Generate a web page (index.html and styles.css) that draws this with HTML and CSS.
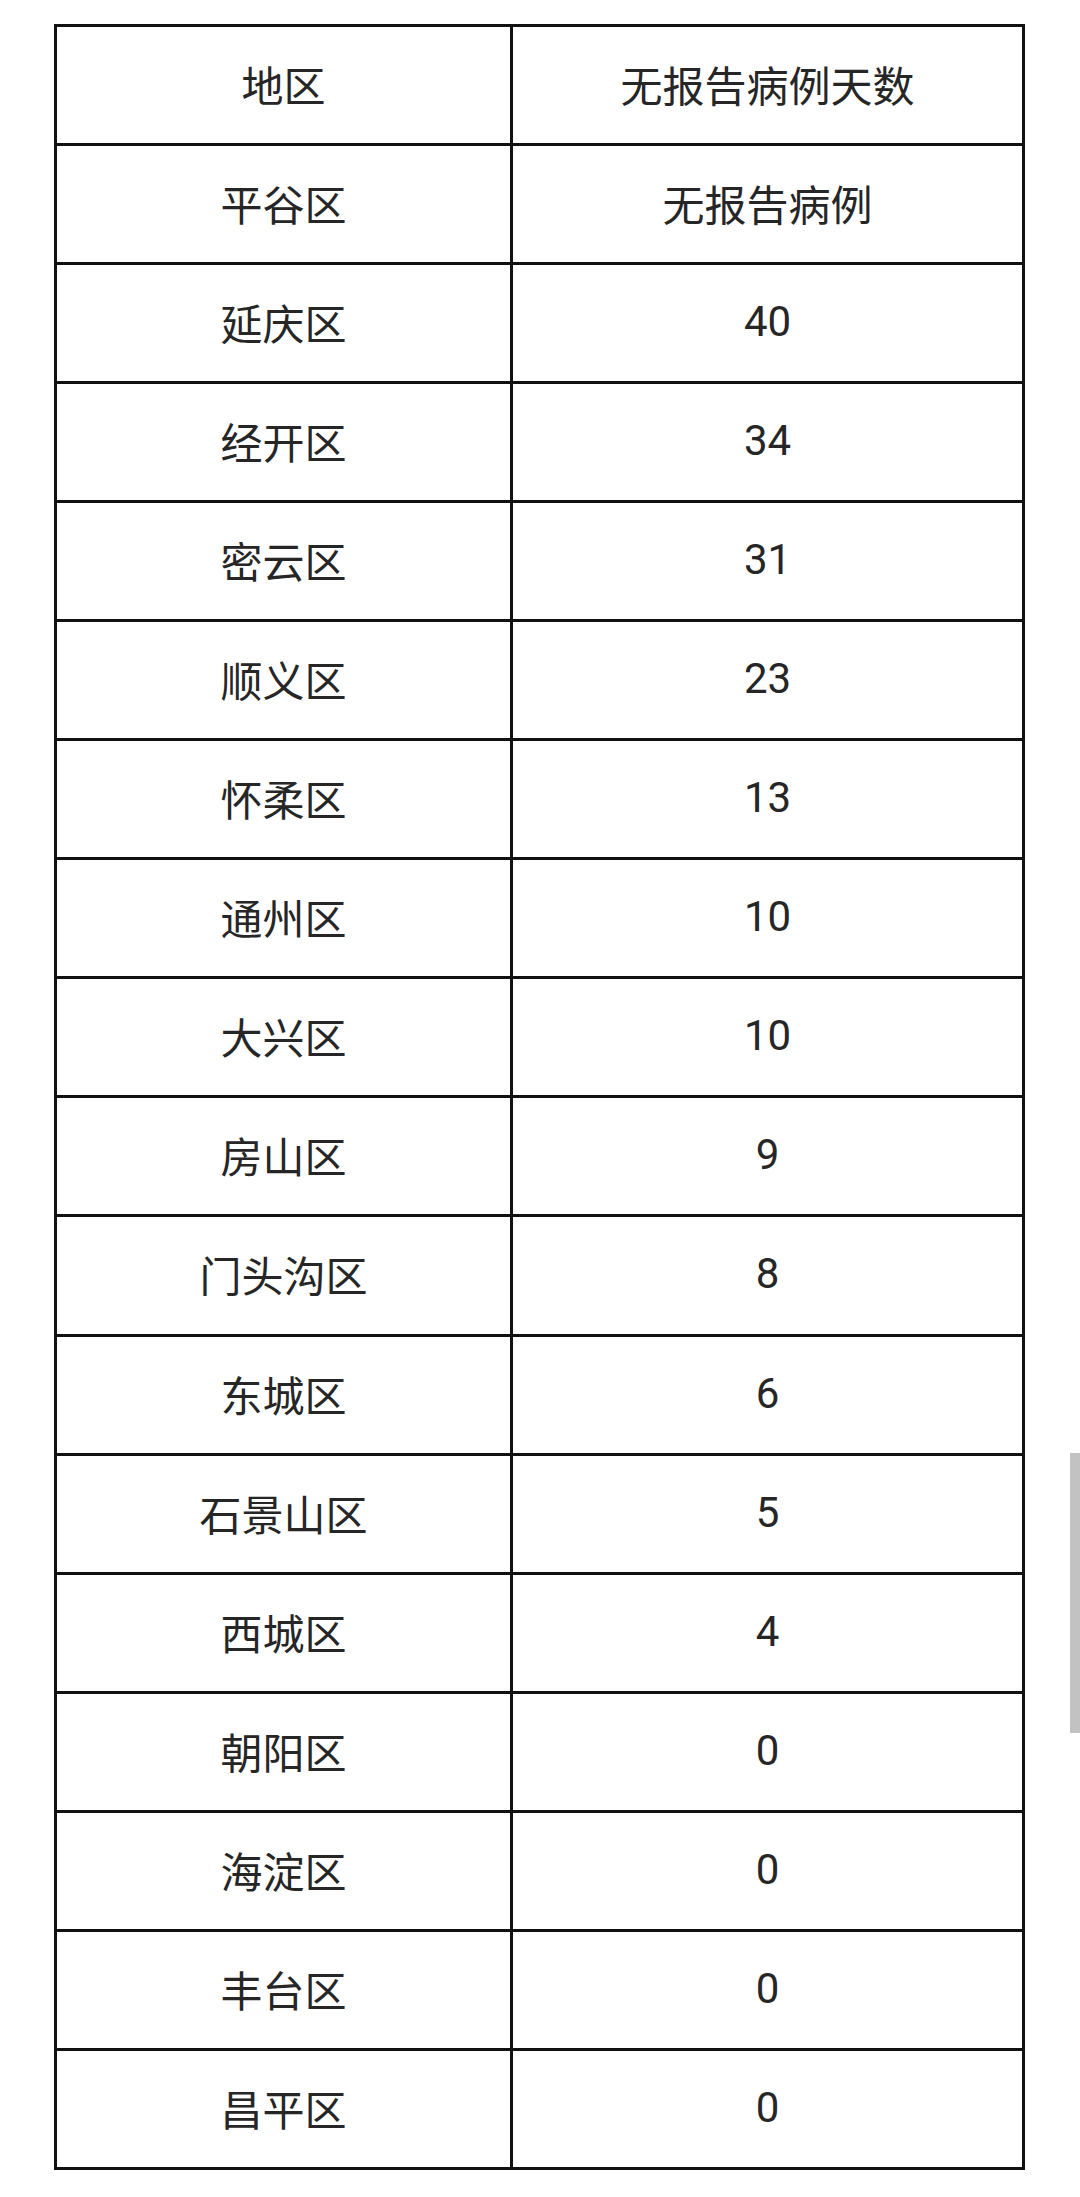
FILE: index.html
```html
<!DOCTYPE html>
<html lang="zh-CN">
<head>
<meta charset="utf-8">
<title>无报告病例天数</title>
<link rel="stylesheet" href="styles.css">
</head>
<body>
<div class="page">
  <div class="grid">
    <div class="cell">地区</div><div class="cell">无报告病例天数</div>
    <div class="cell">平谷区</div><div class="cell">无报告病例</div>
    <div class="cell">延庆区</div><div class="cell num">40</div>
    <div class="cell">经开区</div><div class="cell num">34</div>
    <div class="cell">密云区</div><div class="cell num">31</div>
    <div class="cell">顺义区</div><div class="cell num">23</div>
    <div class="cell">怀柔区</div><div class="cell num">13</div>
    <div class="cell">通州区</div><div class="cell num">10</div>
    <div class="cell">大兴区</div><div class="cell num">10</div>
    <div class="cell">房山区</div><div class="cell num">9</div>
    <div class="cell">门头沟区</div><div class="cell num">8</div>
    <div class="cell">东城区</div><div class="cell num">6</div>
    <div class="cell">石景山区</div><div class="cell num">5</div>
    <div class="cell">西城区</div><div class="cell num">4</div>
    <div class="cell">朝阳区</div><div class="cell num">0</div>
    <div class="cell">海淀区</div><div class="cell num">0</div>
    <div class="cell">丰台区</div><div class="cell num">0</div>
    <div class="cell">昌平区</div><div class="cell num">0</div>
  </div>
  <div class="scrollbar"></div>
</div>
</body>
</html>
```
FILE: styles.css
```css
html, body {
  margin: 0;
  padding: 0;
  background: #ffffff;
}
.page {
  width: 1080px;
  height: 2197px;
  padding: 24px 0 0 54px;
  box-sizing: border-box;
  overflow: hidden;
}
.grid {
  display: grid;
  grid-template-columns: 456px 512px;
  grid-auto-rows: 119.06px;
  width: 971px;
  border-left: 3px solid #111111;
  border-top: 3px solid #111111;
  box-sizing: border-box;
}
.cell {
  display: flex;
  align-items: center;
  justify-content: center;
  border-right: 3px solid #111111;
  border-bottom: 3px solid #111111;
  font-family: Roboto, "Noto Sans CJK SC", sans-serif;
  font-size: 42px;
  color: #262626;
  padding-bottom: 3px;
  box-sizing: border-box;
}
.scrollbar {
  position: absolute;
  left: 1070px;
  top: 1453px;
  width: 10px;
  height: 280px;
  background: #c2c2c2;
}
```
